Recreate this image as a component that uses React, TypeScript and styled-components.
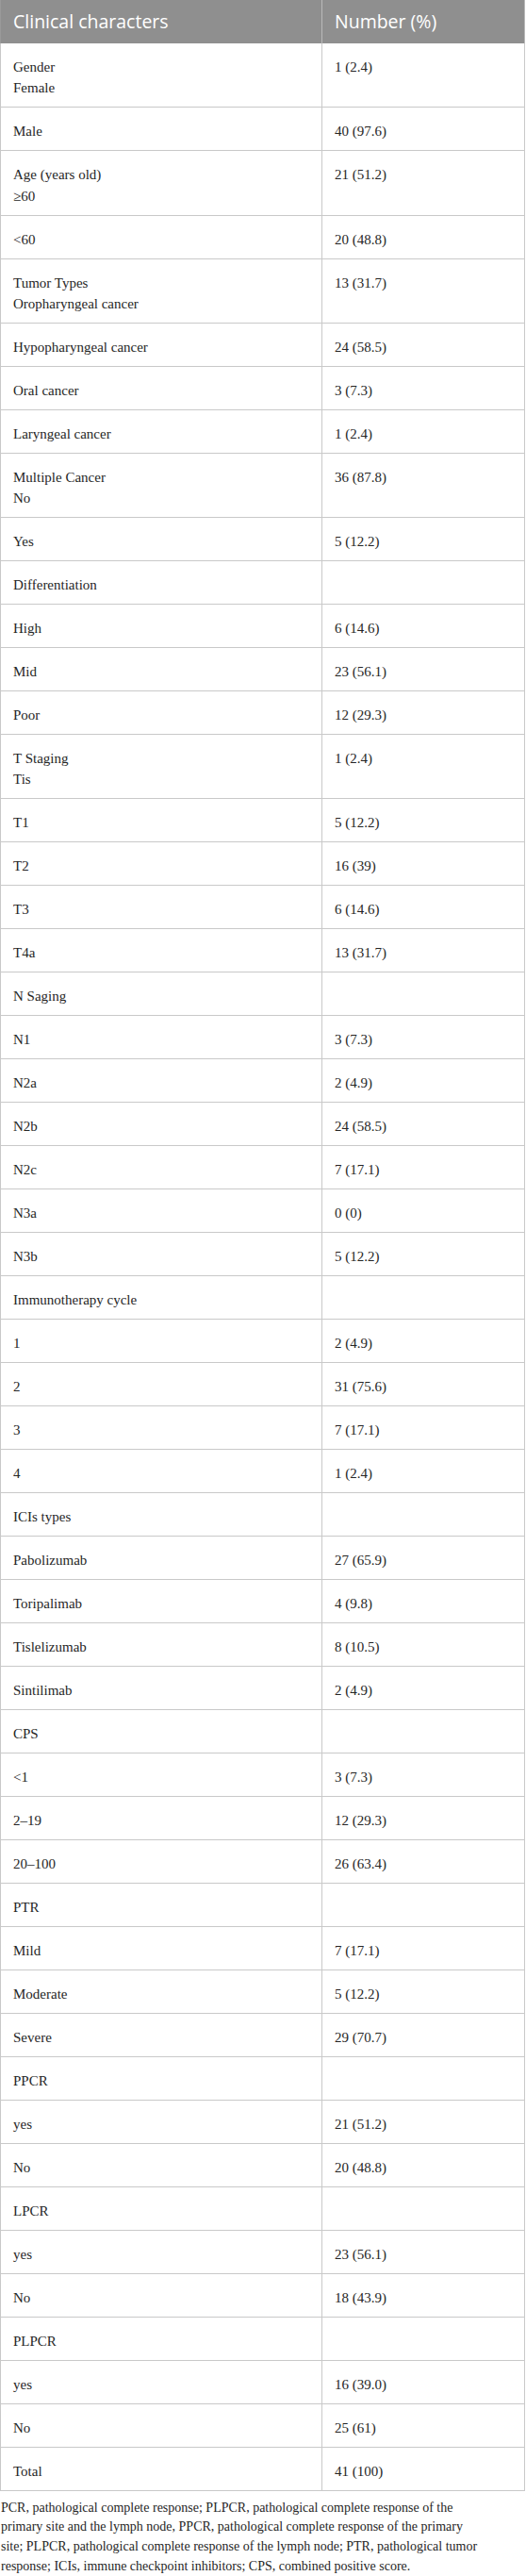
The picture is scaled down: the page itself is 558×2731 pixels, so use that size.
import React from 'react';
import { styled, createGlobalStyle } from 'styled-components';

type Row = { label: string[]; value: string };

const rows: Row[] = [
  { label: ['Gender', 'Female'], value: '1 (2.4)' },
  { label: ['Male'], value: '40 (97.6)' },
  { label: ['Age (years old)', '≥60'], value: '21 (51.2)' },
  { label: ['<60'], value: '20 (48.8)' },
  { label: ['Tumor Types', 'Oropharyngeal cancer'], value: '13 (31.7)' },
  { label: ['Hypopharyngeal cancer'], value: '24 (58.5)' },
  { label: ['Oral cancer'], value: '3 (7.3)' },
  { label: ['Laryngeal cancer'], value: '1 (2.4)' },
  { label: ['Multiple Cancer', 'No'], value: '36 (87.8)' },
  { label: ['Yes'], value: '5 (12.2)' },
  { label: ['Differentiation'], value: '' },
  { label: ['High'], value: '6 (14.6)' },
  { label: ['Mid'], value: '23 (56.1)' },
  { label: ['Poor'], value: '12 (29.3)' },
  { label: ['T Staging', 'Tis'], value: '1 (2.4)' },
  { label: ['T1'], value: '5 (12.2)' },
  { label: ['T2'], value: '16 (39)' },
  { label: ['T3'], value: '6 (14.6)' },
  { label: ['T4a'], value: '13 (31.7)' },
  { label: ['N Saging'], value: '' },
  { label: ['N1'], value: '3 (7.3)' },
  { label: ['N2a'], value: '2 (4.9)' },
  { label: ['N2b'], value: '24 (58.5)' },
  { label: ['N2c'], value: '7 (17.1)' },
  { label: ['N3a'], value: '0 (0)' },
  { label: ['N3b'], value: '5 (12.2)' },
  { label: ['Immunotherapy cycle'], value: '' },
  { label: ['1'], value: '2 (4.9)' },
  { label: ['2'], value: '31 (75.6)' },
  { label: ['3'], value: '7 (17.1)' },
  { label: ['4'], value: '1 (2.4)' },
  { label: ['ICIs types'], value: '' },
  { label: ['Pabolizumab'], value: '27 (65.9)' },
  { label: ['Toripalimab'], value: '4 (9.8)' },
  { label: ['Tislelizumab'], value: '8 (10.5)' },
  { label: ['Sintilimab'], value: '2 (4.9)' },
  { label: ['CPS'], value: '' },
  { label: ['<1'], value: '3 (7.3)' },
  { label: ['2–19'], value: '12 (29.3)' },
  { label: ['20–100'], value: '26 (63.4)' },
  { label: ['PTR'], value: '' },
  { label: ['Mild'], value: '7 (17.1)' },
  { label: ['Moderate'], value: '5 (12.2)' },
  { label: ['Severe'], value: '29 (70.7)' },
  { label: ['PPCR'], value: '' },
  { label: ['yes'], value: '21 (51.2)' },
  { label: ['No'], value: '20 (48.8)' },
  { label: ['LPCR'], value: '' },
  { label: ['yes'], value: '23 (56.1)' },
  { label: ['No'], value: '18 (43.9)' },
  { label: ['PLPCR'], value: '' },
  { label: ['yes'], value: '16 (39.0)' },
  { label: ['No'], value: '25 (61)' },
  { label: ['Total'], value: '41 (100)' },
];

const footnote = [
  'PCR, pathological complete response; PLPCR, pathological complete response of the',
  'primary site and the lymph node, PPCR, pathological complete response of the primary',
  'site; PLPCR, pathological complete response of the lymph node; PTR, pathological tumor',
  'response; ICIs, immune checkpoint inhibitors; CPS, combined positive score.',
];

const App = () => {
  return (
    <Page>
      <GlobalStyle />
      <Table>
        <thead>
          <tr>
            <HeadCell $first>Clinical characters</HeadCell>
            <HeadCell>Number (%)</HeadCell>
          </tr>
        </thead>
        <tbody>
          {rows.map((row, i) => (
            <tr key={i}>
              <Cell $first>
                {row.label.map((line, j) => (
                  <Line key={j}>{line}</Line>
                ))}
              </Cell>
              <Cell>{row.value}</Cell>
            </tr>
          ))}
        </tbody>
      </Table>
      <Footnote>
        {footnote.map((line, i) => (
          <Line key={i}>{line}</Line>
        ))}
      </Footnote>
    </Page>
  );
};

const GlobalStyle = createGlobalStyle`
  * {
    box-sizing: border-box;
  }
  body {
    margin: 0;
    background: #ffffff;
  }
`;

const Page = styled.div`
  width: 558px;
  background: #ffffff;
`;

const Table = styled.table`
  width: 557px;
  table-layout: fixed;
  border-collapse: separate;
  border-spacing: 0;
`;

const HeadCell = styled.th<{ $first?: boolean }>`
  width: ${(p) => (p.$first ? '342px' : '215px')};
  height: 46px;
  padding: 0 8px 2px 13px;
  background-color: #8f8f8f;
  color: #ffffff;
  font-family: 'Open Sans', 'Noto Sans', sans-serif;
  font-size: 19.5px;
  font-weight: 400;
  text-align: left;
  vertical-align: middle;
  border-right: 1px solid #b9b9b9;
  border-left: ${(p) => (p.$first ? '1px solid #9a9a9a' : 'none')};
`;

const Cell = styled.td<{ $first?: boolean }>`
  padding: 14px 8px 8.7px 13px;
  font-family: 'Liberation Serif', 'Times New Roman', serif;
  font-size: 15px;
  line-height: 22.3px;
  color: #262626;
  text-align: left;
  vertical-align: top;
  border-bottom: 1px solid #c9c9c9;
  border-right: 1px solid #c9c9c9;
  border-left: ${(p) => (p.$first ? '1px solid #c9c9c9' : 'none')};
`;

const Line = styled.div``;

const Footnote = styled.div`
  padding: 8px 0 0 1px;
  font-family: 'Liberation Serif', 'Times New Roman', serif;
  font-size: 14px;
  line-height: 20.7px;
  color: #262626;
  white-space: nowrap;
`;

export default App;
